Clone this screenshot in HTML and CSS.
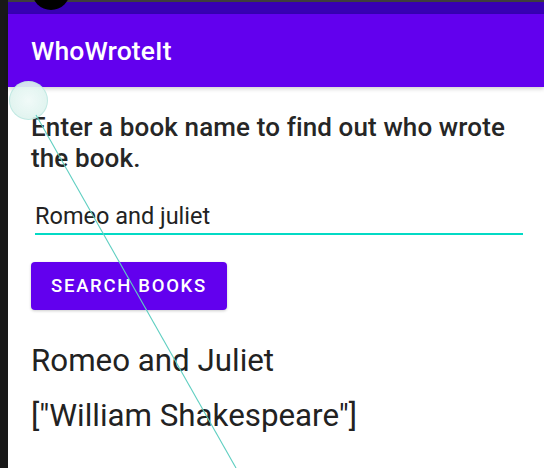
FILE: index.html
```html
<!DOCTYPE html>
<html lang="en">
<head>
<meta charset="utf-8">
<title>WhoWroteIt</title>
<link rel="stylesheet" href="styles.css">
</head>
<body>
<div class="device">
  <div class="bezel"></div>
  <div class="screen">
    <div class="topline"></div>
    <div class="statusbar"></div>
    <header class="appbar"><h1 class="title">WhoWroteIt</h1></header>
    <main class="content">
      <p class="instructions">Enter a book name to find out who wrote the book.</p>
      <div class="field"><span class="field-text">Romeo and juliet</span></div>
      <button class="search-btn" type="button">Search Books</button>
      <p class="result-title">Romeo and Juliet</p>
      <p class="result-author">["William Shakespeare"]</p>
    </main>
  </div>
  <div class="camera"></div>
  <div class="touch"></div>
  <svg class="trace" width="544" height="468" viewBox="0 0 544 468">
    <line x1="36" y1="115" x2="236" y2="468" stroke="#5fcfc1" stroke-width="1.1"/>
  </svg>
</div>
</body>
</html>
```
FILE: styles.css
```css
html, body {
  margin: 0;
  padding: 0;
  background: #ffffff;
}
body {
  font-family: Roboto, "Noto Sans", "Liberation Sans", sans-serif;
  color: #222222;
}
.device {
  position: relative;
  width: 544px;
  height: 468px;
  overflow: hidden;
  display: flex;
}
.bezel {
  width: 8px;
  flex: 0 0 8px;
  background: #181818;
}
.screen {
  flex: 1;
  display: flex;
  flex-direction: column;
  background: #ffffff;
}
.topline {
  height: 2px;
  background: #3e3e3e;
}
.statusbar {
  height: 12px;
  background: #3700b3;
}
.appbar {
  height: 73px;
  background: #6200ee;
  display: flex;
  align-items: center;
  padding-left: 23px;
  box-shadow: 0 2px 4px rgba(0, 0, 0, 0.18);
  position: relative;
  z-index: 1;
}
.title {
  margin: 0;
  color: #ffffff;
  font-size: 26.5px;
  font-weight: 500;
  line-height: 32px;
  letter-spacing: 0.1px;
}
.content {
  padding: 25px 21px 0 23px;
}
.instructions {
  margin: 0;
  font-size: 26px;
  font-weight: 500;
  line-height: 31px;
  letter-spacing: 0.12px;
  color: #262626;
}
.field {
  margin: 29px 0 0 4px;
  padding-bottom: 3px;
  border-bottom: 2px solid #03dac5;
}
.field-text {
  display: block;
  font-size: 23.5px;
  line-height: 27px;
  color: #222222;
}
.search-btn {
  display: block;
  margin-top: 27px;
  width: 196px;
  height: 48px;
  border: none;
  border-radius: 4px;
  background: #6200ee;
  color: #ffffff;
  font-family: Roboto, "Noto Sans", "Liberation Sans", sans-serif;
  font-size: 18.5px;
  font-weight: 500;
  letter-spacing: 1.7px;
  text-transform: uppercase;
  padding: 0;
  box-shadow: 0 1px 3px rgba(0, 0, 0, 0.2);
}
.result-title {
  margin: 33px 0 0;
  font-size: 31.3px;
  line-height: 36px;
  color: #222222;
}
.result-author {
  margin: 19px 0 0;
  font-size: 31.3px;
  line-height: 36px;
  color: #222222;
}
.camera {
  position: absolute;
  left: 32px;
  top: -28px;
  width: 38px;
  height: 38px;
  border-radius: 50%;
  background: #000000;
  z-index: 2;
}
.touch {
  position: absolute;
  left: 9px;
  top: 81px;
  width: 37px;
  height: 37px;
  border-radius: 50%;
  background: radial-gradient(circle at 50% 50%, rgba(240, 250, 248, 0.95), rgba(215, 240, 234, 0.9));
  border: 1px solid rgba(190, 232, 225, 0.9);
  z-index: 3;
}
.trace {
  position: absolute;
  left: 0;
  top: 0;
  z-index: 3;
  pointer-events: none;
}
```
